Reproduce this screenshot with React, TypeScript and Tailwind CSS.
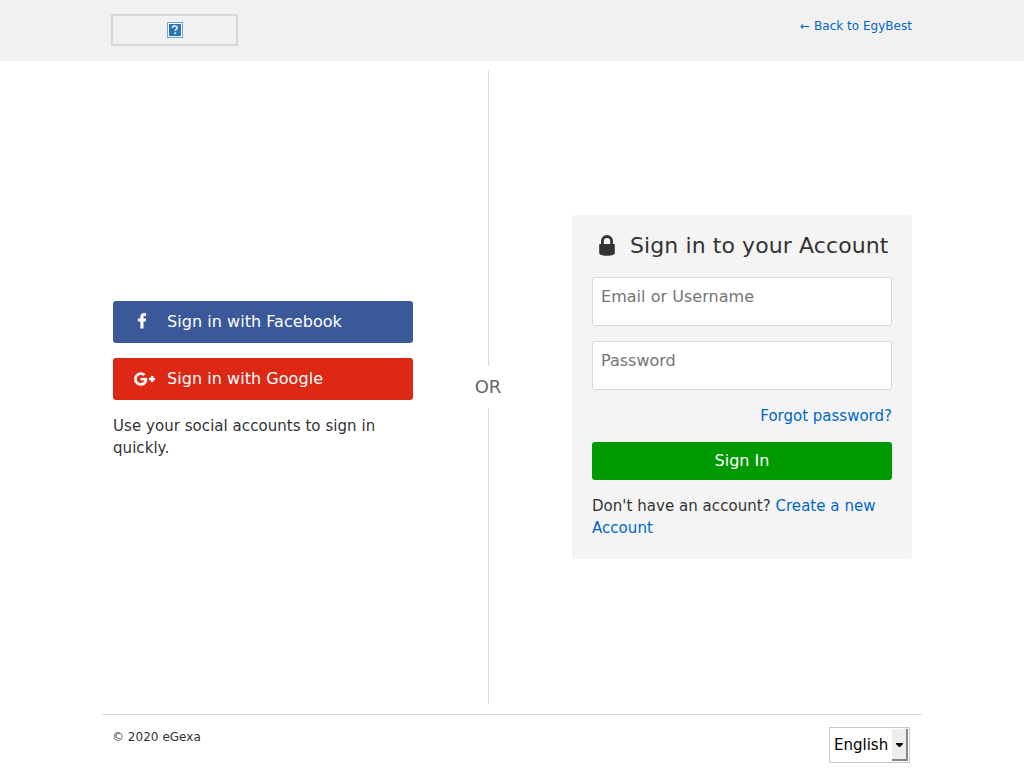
import React from "react";

function FacebookIcon() {
  return (
    <svg width="10" height="16" viewBox="0 0 10 16" fill="#fff" aria-hidden="true">
      <path d="M9.1 0.2v2.7H7.600C6.700 2.900 6.500 3.300 6.500 4v1.600h2.600l-.4 2.800H6.500V15.400H3.400V8.400H.9V5.600h2.500V3.600C3.400 1.300 4.800 0 6.900 0c1 0 1.900.1 2.200.2z" />
    </svg>
  );
}

function GooglePlusIcon() {
  return (
    <svg width="21" height="14" viewBox="0 0 36 23" fill="#fff" stroke="#fff" strokeWidth=".5" aria-hidden="true">
      <path d="M22.55 11.82c0 6.5-4.36 11.12-10.93 11.12C5.33 22.94.24 17.85.24 11.56S5.33.18 11.62.18c3.07 0 5.64 1.13 7.63 2.97l-3.1 2.98c-.84-.81-2.32-1.75-4.53-1.75-3.89 0-7.06 3.22-7.06 7.18s3.17 7.18 7.06 7.18c4.5 0 6.19-3.23 6.46-4.92h-6.46V9.91h10.75c.1.58.18 1.15.18 1.91z" />
      <path d="M36 9.6v3.8h-3.1v3.1h-3.7v-3.1h-3.2V9.6h3.2V6.5h3.7v3.1z" />
    </svg>
  );
}

function LockIcon() {
  return (
    <svg width="16" height="21" viewBox="0 0 16 21" className="block" aria-hidden="true">
      <path d="M3.4 11V6.1a4.6 4.6 0 0 1 9.2 0V11" fill="none" stroke="#333" strokeWidth="2.8" />
      <path d="M1.4 9h13.2c.8 0 1.2.5 1.2 1.2v8.1c0 1.7-3.8 2.5-7.8 2.5S.2 20 .2 18.3v-8.1C.2 9.5.6 9 1.4 9z" fill="#333" />
    </svg>
  );
}

function MissingImage() {
  return (
    <svg width="16" height="16" viewBox="0 0 16 16" className="block" aria-hidden="true">
      <rect x=".5" y=".5" width="15" height="15" fill="#fff" stroke="#6fa3d2" />
      <rect x="2" y="2" width="12" height="12" fill="#2c74b5" />
      <path d="M5.7 6V4.600c1.400-1.100 4.400-.9 4.400 1C10.100 7.200 8.300 7.300 8.200 9" fill="none" stroke="#d9f0fb" strokeWidth="1.7" />
      <rect x="7.2" y="10.3" width="2" height="1.8" fill="#d9f0fb" />
    </svg>
  );
}

export default function App() {
  return (
    <div className="flex h-[768px] flex-col overflow-hidden bg-white font-['DejaVu_Sans',sans-serif] text-[15px] leading-[22px] text-[#333]">
      <header className="h-[61px] shrink-0 bg-[#f1f1f1]">
        <div className="mx-auto flex w-[802px] items-start justify-between pt-[14px]">
          <a href="#" className="flex h-8 w-[127px] items-center justify-center border-2 border-[#d8d8d8]">
            <MissingImage />
          </a>
          <a href="#" className="mt-px mr-px text-[12px] tracking-[0.02px] text-[#0066cc]">← Back to EgyBest</a>
        </div>
      </header>

      <main className="mx-auto flex h-[654px] w-[820px] shrink-0 items-center border-b border-[#d8d8d8]">
        <section className="ml-[11px] w-[300px] shrink-0 pb-[15px]">
          <a href="#" className="flex h-[42px] items-center rounded-[3px] bg-[#3b5998] text-[16px] tracking-[0.05px] text-white">
            <span className="mr-px ml-4 flex w-[37px] -translate-x-[6px] justify-center pb-0.5"><FacebookIcon /></span>
            <span>Sign in with Facebook</span>
          </a>
          <a href="#" className="mt-[15px] flex h-[42px] items-center rounded-[3px] bg-[#dc2814] text-[16px] tracking-[0.05px] text-white">
            <span className="ml-[21px] flex w-[33px] pb-px"><GooglePlusIcon /></span>
            <span>Sign in with Google</span>
          </a>
          <p className="mt-[15px] tracking-[0.05px]">Use your social accounts to sign in quickly.</p>
        </section>

        <div className="ml-[60px] flex h-[633px] w-[30px] shrink-0 flex-col items-center">
          <div className="h-[295px] w-px bg-[#d8d8d8]" />
          <span className="flex h-[42px] items-center text-[18px] text-[#666]">OR</span>
          <div className="w-px flex-1 bg-[#d8d8d8]" />
        </div>

        <section className="mb-px ml-[69px] h-[344px] w-[340px] shrink-0 rounded-[3px] bg-[#f4f4f4] px-5 pt-4">
          <h1 className="flex h-[30px] items-center text-[22px] tracking-[0.09px] whitespace-nowrap">
            <span className="mr-[15px] ml-[7px] pb-0.5"><LockIcon /></span>
            Sign in to your Account
          </h1>
          <input type="text" placeholder="Email or Username" className="mt-4 block h-[49px] w-full rounded-[3px] border border-[#d8d8d8] bg-white px-2 pb-[10px] text-[16px] tracking-[0.03px] outline-none placeholder:text-[#757575]" />
          <input type="password" placeholder="Password" className="mt-[15px] block h-[49px] w-full rounded-[3px] border border-[#d8d8d8] bg-white px-2 pb-[10px] text-[16px] outline-none placeholder:text-[#757575]" />
          <div className="mt-[15px] text-right"><a href="#" className="text-[#0066cc]">Forgot password?</a></div>
          <button className="mt-[15px] block h-[38px] w-full rounded-[3px] bg-[#009900] text-[16px] text-white">Sign In</button>
          <p className="mt-[15px] tracking-[0.04px]">Don't have an account? <a href="#" className="text-[#0066cc]">Create a new Account</a></p>
        </section>
      </main>

      <footer className="mx-auto flex w-[820px] justify-between pt-[11px] pr-3 pl-[10px]">
        <p className="text-[12px] tracking-[0.03px]">© 2020 eGexa</p>
        <button className="mt-px flex h-9 w-[81px] items-center justify-between border border-[#c8c8c8] bg-white pl-1 text-black">
          <span>English</span>
          <span className="mr-px flex h-8 w-4 items-center justify-center border-r-2 border-b-2 border-[#858585] bg-[#efedec] pl-px">
            <svg width="7" height="4" viewBox="0 0 7 4" className="mt-px" aria-hidden="true"><path d="M0 0h7v1L4 4H3L0 1z" fill="#000" /></svg>
          </span>
        </button>
      </footer>
    </div>
  );
}
